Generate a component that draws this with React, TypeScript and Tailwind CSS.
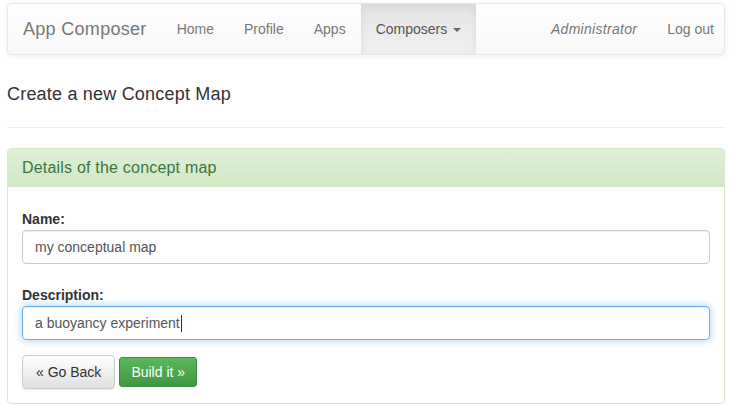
import React from 'react';

const navLinks = ['Home', 'Profile', 'Apps'] as const;

export default function App() {
  return (
    <div className="min-h-[416px] bg-white pl-[7px] pr-[9px] pt-[3px] text-[14px] text-[#333]" style={{ fontFamily: '"Liberation Sans", Arial, sans-serif' }}>
      {/* navbar */}
      <nav className="flex h-[52px] items-stretch rounded-[4px] border border-[#e7e7e7] bg-gradient-to-b from-white to-[#f8f8f8] shadow-[0_1px_5px_rgba(0,0,0,0.075)]">
        <div className="flex items-center px-[15px] text-[18px] tracking-[0.3px] text-[#777]">App Composer</div>
        {navLinks.map((l) => (
          <div key={l} className="flex items-center px-[15px] text-[#777]">{l}</div>
        ))}
        <div className="flex items-center bg-gradient-to-b from-[#e6e6e6] to-[#efefef] px-[15px] text-[#555] shadow-[inset_0_3px_9px_rgba(0,0,0,0.075)]">
          Composers
          <span className="ml-[6px] mt-[1px] h-0 w-0 border-x-[4px] border-t-[4px] border-x-transparent border-t-[#666]" />
        </div>
        <div className="ml-auto flex items-stretch pr-[10px]">
          <div className="flex items-center px-[15px] italic tracking-[0.3px] text-[#777]">Administrator</div>
          <div className="flex items-center pl-[15px] text-[#777]">Log out</div>
        </div>
      </nav>

      {/* heading */}
      <h3 className="mt-[29px] h-[20px] text-[18px] leading-[20px] tracking-[0.2px] text-[#333]">Create a new Concept Map</h3>
      <div className="mt-[23px] h-px bg-[#eee]" />

      {/* panel */}
      <div className="mt-[20px] overflow-hidden rounded-[4px] border border-[#d6e9c6]">
        <div className="flex h-[38px] items-center border-b border-[#d6e9c6] bg-gradient-to-b from-[#dff0d8] to-[#d0e9c6] px-[14px] text-[16px] tracking-[0.2px] text-[#3c763d]">
          Details of the concept map
        </div>
        <div className="px-[14px] pb-[14px] pt-[22px]">
          <div className="h-[20px] font-bold leading-[20px]">Name:</div>
          <div className="mt-px flex h-[34px] items-center rounded-[4px] border border-[#ccc] px-[12px] text-[#555] shadow-[inset_0_1px_1px_rgba(0,0,0,0.075)]">
            my conceptual map
          </div>
          <div className="mt-[21px] h-[20px] font-bold leading-[20px]">Description:</div>
          <div className="mt-px flex h-[34px] items-center rounded-[4px] border border-[#66afe9] px-[12px] text-[#555] shadow-[inset_0_1px_1px_rgba(0,0,0,0.075),0_0_8px_rgba(102,175,233,0.6)]">
            a buoyancy experiment
            <span className="ml-px h-[17px] w-px bg-[#333]" />
          </div>
          <div className="mt-[15px] flex items-center gap-[4px]">
            <div className="flex h-[34px] items-center rounded-[4px] border border-[#ccc] bg-gradient-to-b from-white to-[#e0e0e0] px-[13px] text-[#333] shadow-[inset_0_1px_0_rgba(255,255,255,0.15),0_1px_1px_rgba(0,0,0,0.075)]">
              « Go Back
            </div>
            <div className="flex h-[30px] items-center rounded-[3px] border border-[#3e8f3e] bg-gradient-to-b from-[#5cb85c] to-[#419641] px-[11px] text-white">
              Build it »
            </div>
          </div>
        </div>
      </div>
    </div>
  );
}
